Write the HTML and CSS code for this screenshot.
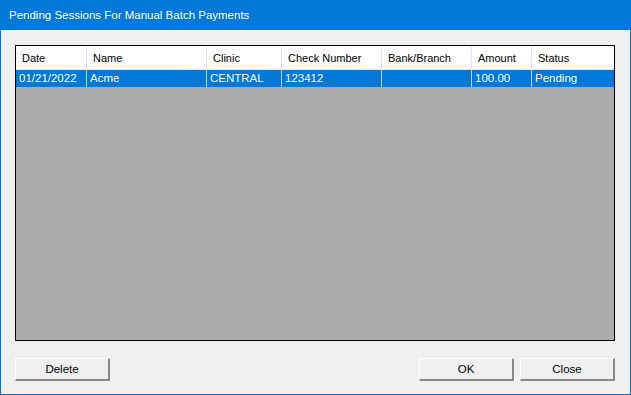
FILE: index.html
```html
<!DOCTYPE html>
<html lang="en">
<head>
    <meta charset="UTF-8">
    <title>Pending Sessions For Manual Batch Payments</title>
    <link rel="stylesheet" href="styles.css">
</head>
<body>
    <div class="window">
        <div class="titlebar">Pending Sessions For Manual Batch Payments</div>
        <div class="content">
            <!-- sessions list -->
            <div class="list">
                <div class="grid header">
                    <div class="cell">Date</div>
                    <div class="cell">Name</div>
                    <div class="cell">Clinic</div>
                    <div class="cell">Check Number</div>
                    <div class="cell">Bank/Branch</div>
                    <div class="cell">Amount</div>
                    <div class="cell">Status</div>
                </div>
                <div class="grid row selected">
                    <div class="cell">01/21/2022</div>
                    <div class="cell">Acme</div>
                    <div class="cell">CENTRAL</div>
                    <div class="cell">123412</div>
                    <div class="cell"></div>
                    <div class="cell">100.00</div>
                    <div class="cell">Pending</div>
                </div>
            </div>

            <div class="buttons">
                <button type="button">Delete</button>
                <div class="spacer"></div>
                <button type="button">OK</button>
                <button type="button">Close</button>
            </div>
        </div>
    </div>
</body>
</html>
```

FILE: styles.css
```css
* {
    box-sizing: border-box;
}
body {
    margin: 0;
    background-color: #f0f0f0;
    font-family: "Liberation Sans", Arial, sans-serif;
    font-size: 11px;
}
.window {
    width: 631px;
    height: 395px;
    border: 1px solid #0078d7;
    background-color: #f0f0f0;
    display: flex;
    flex-direction: column;
}
.titlebar {
    height: 29px;
    background-color: #0078d7;
    color: white;
    font-size: 11.5px;
    padding: 8px 0 0 8px;
}
.content {
    flex: 1;
    padding: 15px 15px 0 14px;
    display: flex;
    flex-direction: column;
}
.list {
    height: 296px;
    border: 1px solid #000;
    background-color: #ababab;
}
.grid {
    display: grid;
    grid-template-columns: 71px 120px 75px 100px 90px 60px 1fr;
}
.header {
    height: 24px;
    background-color: #fff;
    border-bottom: 1px solid #e5e5e5;
}
.header .cell {
    padding: 6px 0 0 6px;
    border-right: 1px solid #e5e5e5;
    color: #000;
}
.header .cell:last-child {
    border-right: none;
}
.row {
    height: 17px;
    font-size: 11.5px;
}
.row .cell {
    padding: 2px 0 0 3px;
    border-right: 1px solid #c8d8e8;
    white-space: nowrap;
}
.row .cell:last-child {
    border-right: none;
}
.selected {
    background-color: #0078d7;
    color: white;
}
.buttons {
    display: flex;
    gap: 6px;
    margin-top: 17px;
}
.spacer {
    flex: 1;
}
button {
    width: 95px;
    height: 23px;
    padding: 0;
    font-family: inherit;
    font-size: 11.5px;
    color: #000;
    background-color: #f0f0f0;
    border-top: 1px solid #fff;
    border-left: 1px solid #fff;
    border-right: 2px solid #8a8a8a;
    border-bottom: 2px solid #8a8a8a;
    border-radius: 0;
}
```
